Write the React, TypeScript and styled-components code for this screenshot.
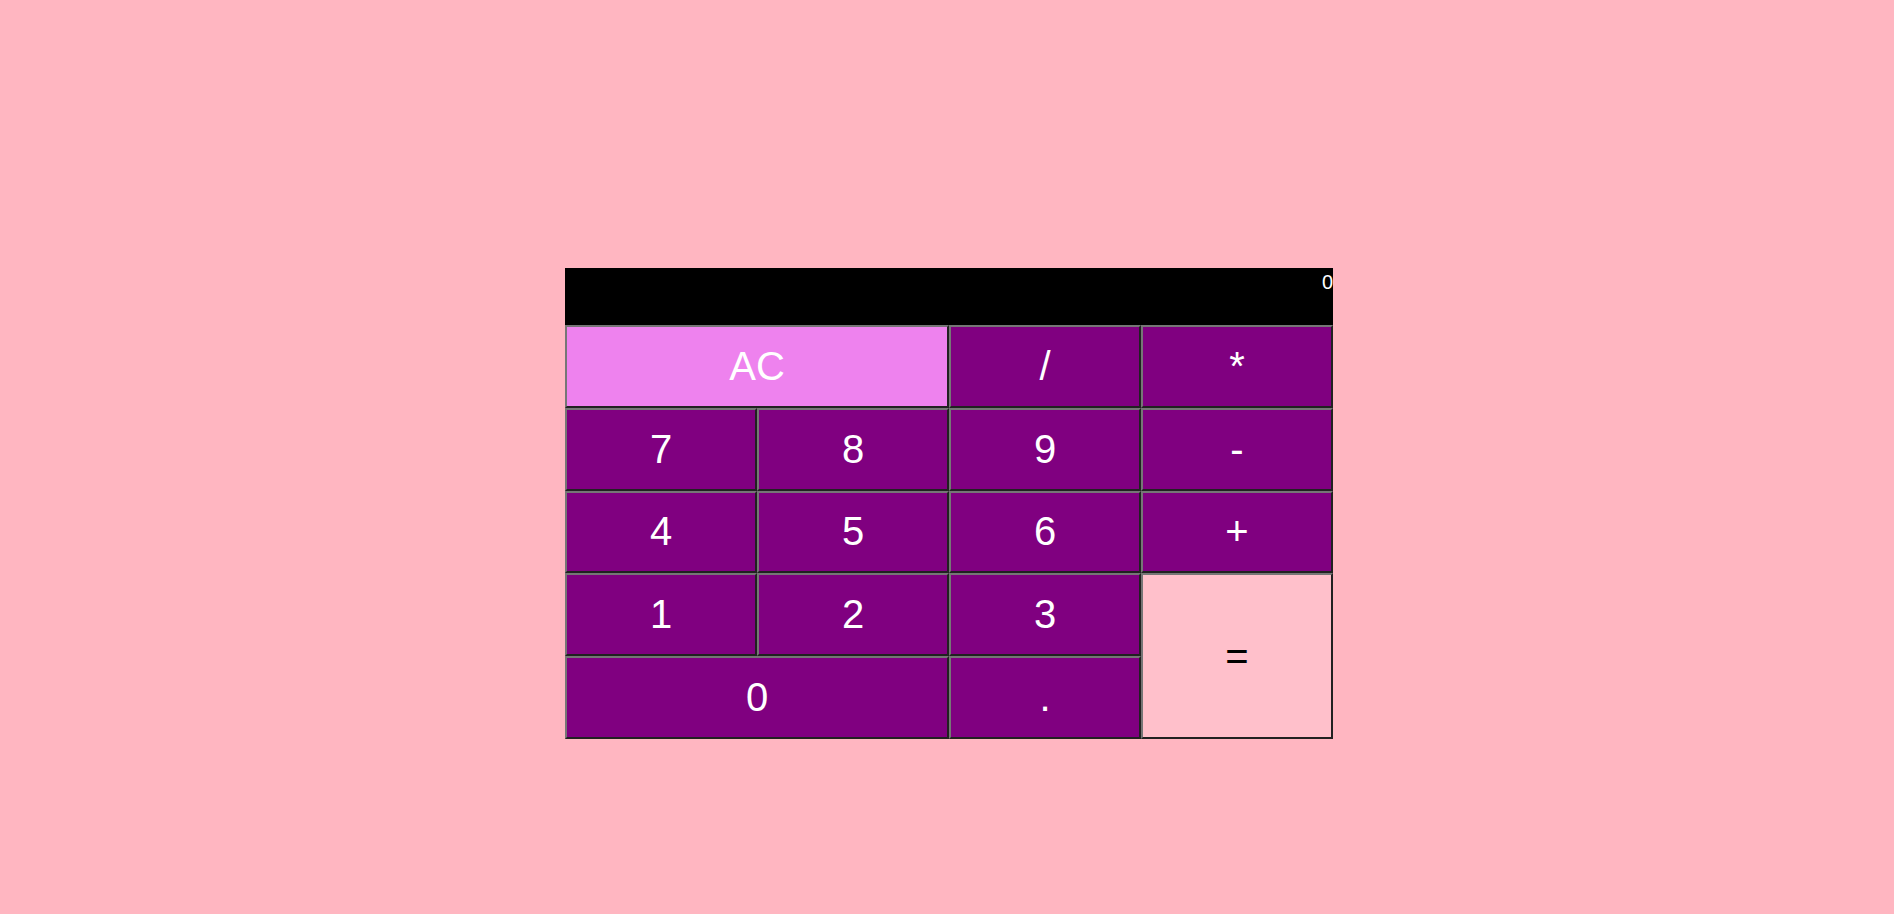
import styled, { createGlobalStyle } from "styled-components";

const GlobalStyle = createGlobalStyle`
  html, body {
    margin: 0;
    padding: 0;
    background-color: #ffb6c1;
    font-family: "Liberation Sans", Arial, sans-serif;
  }
`;

const Page = styled.div`
  min-height: 914px;
  display: flex;
  justify-content: center;
  align-items: flex-start;
  padding: 268px 0 0 4px;
  box-sizing: border-box;
`;

const Calculator = styled.div`
  width: 768px;
  display: grid;
  grid-template-columns: repeat(4, 192px);
  grid-template-rows: 57px repeat(5, 82.8px);
`;

const Display = styled.div`
  grid-column: 1 / span 4;
  background-color: black;
  color: white;
  font-size: 20px;
  text-align: right;
  padding: 3px 0 0 0;
  box-sizing: border-box;
`;

type KeyProps = {
  $kind?: "clear" | "equals" | "digit";
  $cols?: number;
  $rows?: number;
};

const Key = styled.button<KeyProps>`
  grid-column: span ${(p) => p.$cols ?? 1};
  grid-row: span ${(p) => p.$rows ?? 1};
  font-family: "Liberation Sans", Arial, sans-serif;
  font-size: 40px;
  border: 2px outset #767676;
  padding: 1px 6px;
  margin: 0;
  background-color: ${(p) =>
    p.$kind === "clear" ? "violet" : p.$kind === "equals" ? "pink" : "purple"};
  color: ${(p) => (p.$kind === "equals" ? "black" : "white")};
  cursor: pointer;
`;

const App = () => {
  return (
    <>
      <GlobalStyle />
      <Page>
        <Calculator>
          <Display>0</Display>
          <Key $kind="clear" $cols={2}>AC</Key>
          <Key>/</Key>
          <Key>*</Key>
          <Key>7</Key>
          <Key>8</Key>
          <Key>9</Key>
          <Key>-</Key>
          <Key>4</Key>
          <Key>5</Key>
          <Key>6</Key>
          <Key>+</Key>
          <Key>1</Key>
          <Key>2</Key>
          <Key>3</Key>
          <Key $kind="equals" $rows={2}>=</Key>
          <Key $cols={2}>0</Key>
          <Key>.</Key>
        </Calculator>
      </Page>
    </>
  );
};

export default App;
